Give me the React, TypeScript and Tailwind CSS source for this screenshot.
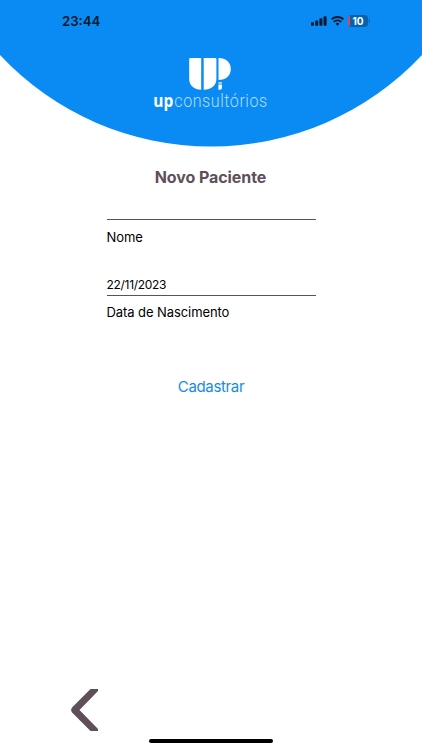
function Signal() {
  return (
    <svg className="h-[10px] w-[16px]" viewBox="0 0 16 10" fill="#04182b">
      <rect x="0" y="6.2" width="3" height="3.6" rx="0.8" />
      <rect x="4.2" y="4.4" width="3" height="5.4" rx="0.8" />
      <rect x="8.4" y="2.2" width="3" height="7.6" rx="0.8" />
      <rect x="12.6" y="0.2" width="3" height="9.6" rx="0.8" />
    </svg>
  );
}

function Wifi() {
  return (
    <svg className="h-[10px] w-[13px]" viewBox="0 0 13 10" fill="none" stroke="#04182b">
      <path d="M0.6 3.4A8.4 8.4 0 0 1 12.4 3.4" strokeWidth="2" />
      <path d="M2.7 5.9A5.4 5.4 0 0 1 10.3 5.9" strokeWidth="1.9" />
      <path d="M4.6 7.7A2.7 2.7 0 0 1 8.4 7.7L6.5 9.8Z" fill="#04182b" stroke="none" />
    </svg>
  );
}

function Battery() {
  return (
    <div className="flex items-center">
      <div className="relative flex h-[12px] w-[20px] items-center justify-center overflow-hidden rounded-[3.5px] bg-[#0861ad] text-[10px] leading-none font-bold text-white">
        <span className="absolute inset-y-0 left-0 w-[2px] bg-[#d8485c]" />
        10
      </div>
      <div className="ml-px h-1 w-px rounded-r bg-[#0861ad]" />
    </div>
  );
}

function Logo() {
  return (
    <svg className="h-[60px] w-[116px]" viewBox="153 56 116 60" fill="white" role="img" aria-label="upconsultórios">
      <path d="M190.3 58H201.2V89.8C194 89.8 189.2 85.5 189.2 79V59Q189.2 58 190.3 58Z" />
      <path d="M203.7 58H215.4Q216.4 58 216.4 59V79C216.4 85.5 211 89.8 203.7 89.8Z" />
      <path d="M218.5 58C226 58 230.8 62.6 230.8 69S226 80 218.5 80Z" />
      <path d="M218.4 82.2H221.9V83.6H218.4ZM218.4 84.6H221.9V88Q221.9 89.8 220 89.8H218.4Z" />
      <text x="153.3" y="106.8" fontFamily="Open Sans, sans-serif" fontSize="17.5" fontWeight="700" textLength="20" lengthAdjust="spacingAndGlyphs">up</text>
      <g transform="translate(174.3 106.8) scale(0.92 1)">
        <text fontFamily="Roboto, sans-serif" fontSize="17.5" fontWeight="300" fill="#b3dcfc" textLength="101">consultórios</text>
      </g>
    </svg>
  );
}

export default function App() {
  return (
    <main className="relative flex h-[750px] w-[422px] flex-col overflow-hidden bg-white font-['Inter',sans-serif] text-black">
      <svg className="absolute top-0 left-0 h-[150px] w-[422px]" viewBox="0 0 422 150" aria-hidden="true">
        <path d="M0 0H422V55A289 289 0 0 1 0 55Z" fill="#0a8bf3" />
      </svg>
      <header className="relative flex h-[147px] flex-col">
        <div className="flex h-[42px] items-center justify-between pr-[52px] pl-[62px]">
          <time className="pt-px text-[13.2px] font-semibold text-[#04182b]">23:44</time>
          <div className="flex items-center gap-1">
            <Signal />
            <Wifi />
            <Battery />
          </div>
        </div>
        <div className="mt-[14px] flex justify-center">
          <Logo />
        </div>
      </header>
      <h1 className="mt-[18px] pr-px text-center text-[16px] leading-6 font-bold tracking-[-0.08px] text-[#5f4f58]">Novo Paciente</h1>
      <form className="mx-auto flex w-[209px] flex-col">
        <div className="h-[31px] border-b border-[#555]" />
        <label className="mt-[7px] text-[13px] leading-5 tracking-[-0.08px]">Nome</label>
        <div className="mt-[29px] h-[20px] border-b border-[#555] text-[12px] leading-[18px] tracking-[-0.3px]">22/11/2023</div>
        <label className="mt-[6px] text-[13px] leading-5 tracking-[-0.08px]">Data de Nascimento</label>
        <button type="button" className="mt-[53px] text-center text-[15px] leading-6 tracking-[-0.35px] text-[#168be0]">Cadastrar</button>
      </form>
      <footer className="mt-auto flex h-[64px] flex-col">
        <svg className="ml-[70px] h-[45px] w-[30px]" viewBox="70 686 30 45" aria-label="Voltar">
          <path d="M90.5 689H98V691L79.5 710L98 729V731H90.5L71.8 712.2Q70.3 710 71.8 707.8Z" fill="#5f4f58" />
        </svg>
        <div className="mt-[7.5px] ml-[149px] h-[4.5px] w-[124px] rounded-full bg-black" />
      </footer>
    </main>
  );
}
